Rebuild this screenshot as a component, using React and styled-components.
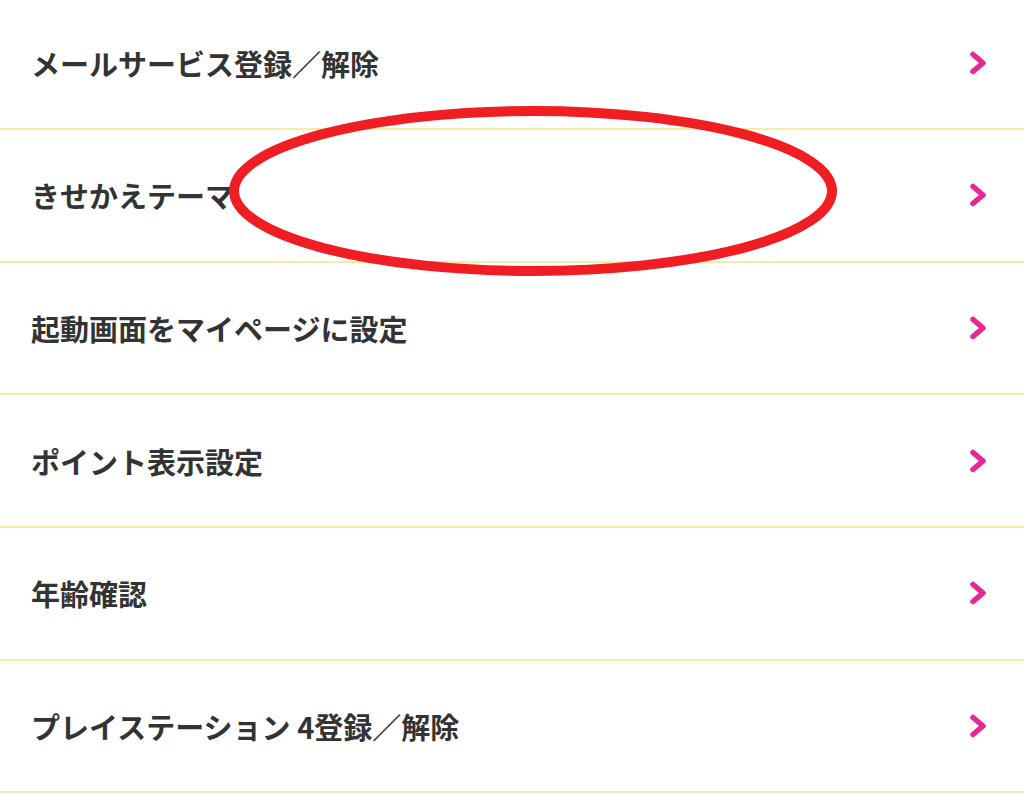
import React from 'react';
import styled, { createGlobalStyle } from 'styled-components';

const GlobalStyle = createGlobalStyle`
  html, body {
    margin: 0;
    padding: 0;
    background: #fff;
    overflow: hidden;
  }
  body {
    font-family: "Noto Sans CJK JP", "Noto Sans", sans-serif;
  }
`;

const Page = styled.div`
  position: relative;
  width: 1024px;
  height: 794px;
  overflow: hidden;
  background: #fff;
`;

const List = styled.ul`
  list-style: none;
  margin: -2.7px 0 0;
  padding: 0;
`;

const Row = styled.li`
  display: flex;
  align-items: center;
  justify-content: space-between;
  height: 130.7px;
  padding: 0 37px 0 31px;
  border-bottom: 2.5px solid #f6eca6;
`;

const Label = styled.span`
  font-size: 29px;
  font-weight: 700;
  color: #333;
  letter-spacing: 0;
`;

const Mark = styled.svg`
  width: 18px;
  height: 24px;
  flex: none;
`;

// red marker ellipse drawn over the second row
const Circle = styled.svg`
  position: absolute;
  left: 228px;
  top: 104px;
  width: 610px;
  height: 176px;
  pointer-events: none;
`;

const items = [
  'メールサービス登録／解除',
  'きせかえテーマ',
  '起動画面をマイページに設定',
  'ポイント表示設定',
  '年齢確認',
  'プレイステーション 4登録／解除',
];

function Chevron() {
  return (
    <Mark viewBox="0 0 18 24">
      <path d="M4 3.5 L14 12 L4 20.5" fill="none" stroke="#e62796" strokeWidth="5.5" strokeLinecap="round" strokeLinejoin="round" />
    </Mark>
  );
}

export default function App() {
  return (
    <Page>
      <GlobalStyle />
      <List>
        {items.map((t) => (
          <Row key={t}>
            <Label>{t}</Label>
            <Chevron />
          </Row>
        ))}
      </List>
      <Circle viewBox="0 0 610 176">
        <ellipse cx="305" cy="87" rx="299" ry="80" fill="none" stroke="#f01e22" strokeWidth="10" />
      </Circle>
    </Page>
  );
}
